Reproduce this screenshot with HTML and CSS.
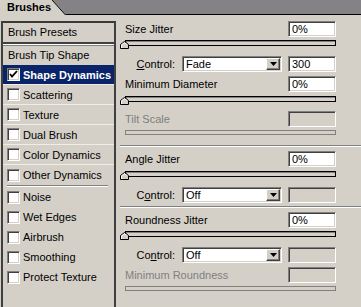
FILE: index.html
```html
<!DOCTYPE html>
<html lang="en">
<head>
    <meta charset="UTF-8">
    <title>Brushes</title>
    <link rel="stylesheet" href="styles.css">
</head>
<body>
    <div class="tabbar">
        <div class="tab">Brushes</div>
        <svg class="tab-edge" width="14" height="15" viewBox="0 0 14 15">
            <polygon points="0,0 0.5,0 14,15 0,15" fill="#d4d0c8"/>
            <line x1="0" y1="0" x2="13.5" y2="15" stroke="#000" stroke-width="1"/>
        </svg>
    </div>

    <div class="main">
        <div class="sidebar">
            <div class="item">Brush Presets</div>
            <div class="double-rule"></div>
            <div class="item">Brush Tip Shape</div>
            <div class="opt selected"><span class="check"><svg width="9" height="9" viewBox="0 0 9 9"><polyline points="1,4 3,6.5 8,1" fill="none" stroke="#000" stroke-width="1.8"/></svg></span>Shape Dynamics</div>
            <div class="opt"><span class="check"></span>Scattering</div>
            <div class="opt"><span class="check"></span>Texture</div>
            <div class="opt"><span class="check"></span>Dual Brush</div>
            <div class="opt"><span class="check"></span>Color Dynamics</div>
            <div class="opt last"><span class="check"></span>Other Dynamics</div>
            <div class="group-rule"></div>
            <div class="opt plain"><span class="check"></span>Noise</div>
            <div class="opt plain"><span class="check"></span>Wet Edges</div>
            <div class="opt plain"><span class="check"></span>Airbrush</div>
            <div class="opt plain"><span class="check"></span>Smoothing</div>
            <div class="opt plain"><span class="check"></span>Protect Texture</div>
        </div>

        <div class="settings">
            <!-- size jitter -->
            <div class="field">
                <span>Size Jitter</span>
                <div class="num">0%</div>
            </div>
            <div class="track gap-s">
                <svg class="thumb" width="9" height="8" viewBox="0 0 9 8"><polygon points="0.5,7.5 0.5,3.5 4.5,0.5 8.5,3.5 8.5,7.5" fill="#d4d0c8" stroke="#000"/><polyline points="1.5,7 1.5,4 4.5,1.7 7,3.6" fill="none" stroke="#fff"/></svg>
            </div>
            <div class="control">
                <span class="control-label"><u>C</u>ontrol:</span>
                <div class="select"><span class="select-text">Fade</span><span class="drop"><svg width="7" height="4" viewBox="0 0 7 4"><polygon points="0,0 7,0 3.5,4" fill="#000"/></svg></span></div>
                <div class="num">300</div>
            </div>
            <div class="field gap-xs">
                <span>Minimum Diameter</span>
                <div class="num">0%</div>
            </div>
            <div class="track gap-xs">
                <svg class="thumb" width="9" height="8" viewBox="0 0 9 8"><polygon points="0.5,7.5 0.5,3.5 4.5,0.5 8.5,3.5 8.5,7.5" fill="#d4d0c8" stroke="#000"/><polyline points="1.5,7 1.5,4 4.5,1.7 7,3.6" fill="none" stroke="#fff"/></svg>
            </div>
            <div class="field off gap-m">
                <span>Tilt Scale</span>
                <div class="num"></div>
            </div>
            <div class="track off gap-s"></div>

            <div class="rule"></div>

            <!-- angle jitter -->
            <div class="field gap-xs">
                <span>Angle Jitter</span>
                <div class="num">0%</div>
            </div>
            <div class="track gap-xs">
                <svg class="thumb" width="9" height="8" viewBox="0 0 9 8"><polygon points="0.5,7.5 0.5,3.5 4.5,0.5 8.5,3.5 8.5,7.5" fill="#d4d0c8" stroke="#000"/><polyline points="1.5,7 1.5,4 4.5,1.7 7,3.6" fill="none" stroke="#fff"/></svg>
            </div>
            <div class="control">
                <span class="control-label">C<u>o</u>ntrol:</span>
                <div class="select"><span class="select-text">Off</span><span class="drop"><svg width="7" height="4" viewBox="0 0 7 4"><polygon points="0,0 7,0 3.5,4" fill="#000"/></svg></span></div>
                <div class="num off"></div>
            </div>

            <div class="rule rule-tight"></div>

            <!-- roundness jitter -->
            <div class="field gap-xs">
                <span>Roundness Jitter</span>
                <div class="num">0%</div>
            </div>
            <div class="track gap-s">
                <svg class="thumb" width="9" height="8" viewBox="0 0 9 8"><polygon points="0.5,7.5 0.5,3.5 4.5,0.5 8.5,3.5 8.5,7.5" fill="#d4d0c8" stroke="#000"/><polyline points="1.5,7 1.5,4 4.5,1.7 7,3.6" fill="none" stroke="#fff"/></svg>
            </div>
            <div class="control">
                <span class="control-label">Co<u>n</u>trol:</span>
                <div class="select"><span class="select-text">Off</span><span class="drop"><svg width="7" height="4" viewBox="0 0 7 4"><polygon points="0,0 7,0 3.5,4" fill="#000"/></svg></span></div>
                <div class="num off"></div>
            </div>
            <div class="field off gap-xs">
                <span>Minimum Roundness</span>
                <div class="num"></div>
            </div>
            <div class="track off gap-s"></div>
        </div>
    </div>
</body>
</html>
```

FILE: styles.css
```css
body {
    margin: 0;
    width: 361px;
    height: 307px;
    overflow: hidden;
    background: #d4d0c8;
    font-family: "Liberation Sans", Arial, sans-serif;
    font-size: 11px;
    color: #000;
}

/* tab strip */
.tabbar {
    display: flex;
    height: 15px;
    background: #848284;
    box-shadow: inset 0 -1px 0 #000;
}
.tab {
    width: 45px;
    padding-left: 7px;
    background: #d4d0c8;
    font-weight: bold;
    line-height: 14px;
}
.tab-edge {
    display: block;
}

.main {
    display: flex;
    padding-top: 6px;
}

/* left list */
.sidebar {
    width: 111px;
    height: 286px;
    margin-left: 1px;
    margin-right: 4px;
    border: 2px solid #404040;
    border-bottom: none;
    border-top-color: #3a3a3a;
}
.item {
    height: 19px;
    line-height: 19px;
    padding-left: 5px;
}
.double-rule {
    height: 1px;
    border-top: 2px solid #404040;
    border-bottom: 1px solid #808080;
    background: #fff;
}
.opt {
    display: flex;
    align-items: center;
    height: 19px;
    padding-left: 4px;
    border-bottom: 1px solid #eeede8;
}
.opt.last,
.opt.plain {
    height: 20px;
    border-bottom: none;
}
.opt.selected {
    background: #0a246a;
    color: #fff;
    font-weight: bold;
}
.check {
    display: flex;
    align-items: center;
    justify-content: center;
    width: 13px;
    height: 13px;
    box-sizing: border-box;
    margin-right: 3px;
    background: #fff;
    border: 1px solid;
    border-color: #808080 #fff #fff #808080;
    box-shadow: inset 1px 1px 0 #404040, inset -1px -1px 0 #d4d0c8;
}
.group-rule {
    margin: 0 6px 0 4px;
    border-top: 1px solid #808080;
    border-bottom: 1px solid #fff;
}

/* right settings */
.settings {
    flex: 1;
    padding: 0 25px 0 5px;
}
.field {
    display: flex;
    align-items: center;
    justify-content: space-between;
    height: 16px;
}
.off {
    color: #808080;
}
.num {
    width: 48px;
    height: 16px;
    box-sizing: border-box;
    padding-left: 3px;
    line-height: 14px;
    color: #000;
    background: #fff;
    border: 1px solid;
    border-color: #808080 #fff #fff #808080;
    box-shadow: inset 1px 1px 0 #404040, inset -1px -1px 0 #d4d0c8;
}
.off .num,
.num.off {
    background: #d4d0c8;
}
.track {
    position: relative;
    height: 6px;
    box-sizing: border-box;
    border: 1px solid #000;
    box-shadow: inset 1px 1px 0 #808080;
}
.track.off {
    height: 5px;
    border-color: #808080;
    box-shadow: none;
}
.thumb {
    position: absolute;
    left: -6px;
    top: 0;
    display: block;
}
.control {
    display: flex;
    align-items: center;
    height: 16px;
    margin-top: 10px;
}
.control-label {
    width: 50px;
    margin-right: 7px;
    text-align: right;
}
.select {
    display: flex;
    align-items: center;
    justify-content: space-between;
    width: 100px;
    height: 16px;
    box-sizing: border-box;
    margin-right: 6px;
    background: #fff;
    border: 1px solid;
    border-color: #808080 #fff #fff #808080;
    box-shadow: inset 1px 1px 0 #404040, inset -1px -1px 0 #d4d0c8;
}
.select-text {
    padding-left: 3px;
    line-height: 14px;
}
.drop {
    display: flex;
    align-items: center;
    justify-content: center;
    align-self: flex-start;
    width: 14px;
    height: 12px;
    box-sizing: border-box;
    margin: 1px 1px 0 0;
    background: #d4d0c8;
    border: 1px solid;
    border-color: #fff #404040 #404040 #fff;
    box-shadow: inset -1px -1px 0 #808080;
}
.drop svg {
    display: block;
}
.rule {
    margin: 10px -25px 0 -5px;
    border-top: 1px solid #808080;
    border-bottom: 1px solid #fff;
}
.rule-tight {
    margin-top: 3px;
}
.gap-xs { margin-top: 4px; }
.gap-s { margin-top: 3px; }
.gap-m { margin-top: 9px; }
```
